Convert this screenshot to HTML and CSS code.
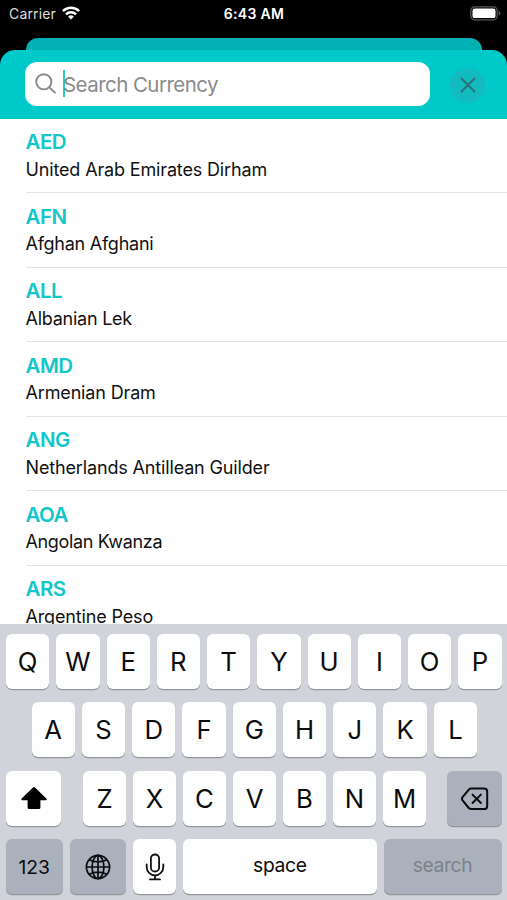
FILE: index.html
```html
<!DOCTYPE html>
<html lang="en">
<head>
<meta charset="utf-8">
<title>Search Currency</title>
<link rel="stylesheet" href="styles.css">
</head>
<body>
<div class="phone">
  <div class="status">
    <div class="carrier"><span class="carrier-name">Carrier</span>
      <svg class="wifi" width="18" height="14" viewBox="0 0 18 14" fill="none" stroke="#fff" stroke-width="2.5"><path d="M.9 5.1a11.5 11.5 0 0 1 16.2 0M4 8.4a7.1 7.1 0 0 1 10 0"/><path d="M9 13.6 6.1 10.7a4.1 4.1 0 0 1 5.8 0z" fill="#fff" stroke="none"/></svg>
    </div>
    <div class="time">6:43 AM</div>
    <svg class="battery" width="31" height="15" viewBox="0 0 31 15"><rect x=".8" y=".8" width="26.4" height="13" rx="4" fill="none" stroke="#59595b" stroke-width="1.3"/><rect x="2.5" y="2.5" width="23" height="9.6" rx="2.2" fill="#fff"/><path d="M28.6 5v4.6q1.8-.6 1.8-2.3T28.6 5z" fill="#59595b"/></svg>
  </div>
  <div class="back-card"></div>
  <header class="header">
    <div class="field">
      <svg class="glass" width="22" height="22" viewBox="0 0 22 22" fill="none" stroke="#8a8a8d" stroke-width="1.9" stroke-linecap="round"><circle cx="8.8" cy="8.8" r="7.6"/><path d="m14.4 14.4 5.6 5.3"/></svg>
      <span class="caret"></span><span class="placeholder">Search Currency</span>
    </div>
    <div class="close"><svg width="16" height="16" viewBox="0 0 16 16" stroke="#2b7478" stroke-width="2.1" stroke-linecap="round"><path d="m1.5 1.5 13 13m0-13-13 13"/></svg></div>
  </header>
  <main class="list">
    <div class="row"><div class="code">AED</div><div class="name">United Arab Emirates Dirham</div></div>
    <div class="row"><div class="code">AFN</div><div class="name snug">Afghan Afghani</div></div>
    <div class="row"><div class="code">ALL</div><div class="name snug">Albanian Lek</div></div>
    <div class="row"><div class="code">AMD</div><div class="name">Armenian Dram</div></div>
    <div class="row"><div class="code">ANG</div><div class="name">Netherlands Antillean Guilder</div></div>
    <div class="row"><div class="code">AOA</div><div class="name tight">Angolan Kwanza</div></div>
    <div class="row"><div class="code">ARS</div><div class="name">Argentine Peso</div></div>
  </main>
  <section class="keyboard">
    <div class="keys"><div class="key">Q</div><div class="key">W</div><div class="key">E</div><div class="key">R</div><div class="key">T</div><div class="key">Y</div><div class="key">U</div><div class="key">I</div><div class="key">O</div><div class="key">P</div></div>
    <div class="keys middle"><div class="key">A</div><div class="key">S</div><div class="key">D</div><div class="key">F</div><div class="key">G</div><div class="key">H</div><div class="key">J</div><div class="key">K</div><div class="key">L</div></div>
    <div class="keys">
      <div class="key shift"><svg width="28" height="24" viewBox="0 0 28 24"><path d="M13 1.5q1-.9 2 0L26.3 12.4q1.2 1.5-.6 1.8H20.4v7.3q0 1.5-1.5 1.5H9.1q-1.5 0-1.5-1.5v-7.3H2.3q-1.8-.3-.6-1.8z"/></svg></div>
      <div class="key">Z</div><div class="key">X</div><div class="key">C</div><div class="key">V</div><div class="key">B</div><div class="key">N</div><div class="key">M</div>
      <div class="key gray delete"><svg width="28" height="24" viewBox="0 0 28 24" fill="none" stroke="#090b0f" stroke-width="2" stroke-linecap="round" stroke-linejoin="round"><path d="M10.3 1.5H23q3.2 0 3.2 3.2v14.2q0 3.2-3.2 3.2H10.3q-1.5 0-2.5-1.1L1.6 13.4q-1.3-1.6 0-3.2L7.8 2.6q1-1.1 2.5-1.1z"/><path d="m11.5 7.6 8.4 8.4m0-8.4-8.4 8.4"/></svg></div>
    </div>
    <div class="keys">
      <div class="key gray numbers">123</div>
      <div class="key gray globe"><svg width="26" height="26" viewBox="0 0 26 26" fill="none" stroke="#090b0f" stroke-width="1.7"><circle cx="13" cy="13" r="11.6"/><ellipse cx="13" cy="13" rx="5.9" ry="11.6"/><path d="M13 1.4v23.2M1.4 13h23.2M4 5.8q9 4.2 18 0M4 20.2q9-4.2 18 0"/></svg></div>
      <div class="key mic"><svg width="20" height="28" viewBox="0 0 20 28" fill="none" stroke="#111" stroke-width="1.8" stroke-linecap="round"><rect x="5.9" y="1.5" width="8.2" height="17" rx="4.1"/><path d="M1.7 11.3v2.8a8.3 8.3 0 0 0 16.6 0v-2.8M10 22.3v4M5 26.4h10"/></svg></div>
      <div class="key space">space</div>
      <div class="key gray search">search</div>
    </div>
  </section>
</div>
</body>
</html>
```

FILE: styles.css
```css
* { box-sizing: border-box; }
body { margin: 0; background: #000; font-family: Inter, "Liberation Sans", sans-serif; }
svg { display: block; flex: none; }
.phone { width: 507px; height: 900px; overflow: hidden; display: flex; flex-direction: column; background: #000; }
.status { height: 37.5px; flex: none; display: grid; grid-template-columns: 1fr auto 1fr; padding: 0 8px 0 9px; color: #fff; font-size: 14px; line-height: 28px; }
.carrier { display: flex; gap: 6px; color: #dedede; }
.carrier-name { letter-spacing: .15px; }
.wifi { margin-top: 6px; }
.time { font-weight: 600; letter-spacing: .3px; }
.battery { justify-self: end; margin: 6px -2px 0 0; }
.back-card { height: 26px; flex: none; margin: 0 25px 0 25.5px; background: #00b0b3; border-radius: 12px 12px 0 0; }
.header { height: 68.5px; flex: none; margin-top: -13.5px; padding: 11.5px 22px 0 25px; background: #00c9ca; border-radius: 15px 15px 0 0; display: flex; justify-content: space-between; }
.field { width: 405px; height: 44px; background: #fff; border-radius: 12px; display: flex; align-items: center; padding-left: 9.5px; }
.caret { width: 2px; height: 27px; margin-left: 6px; background: #28c8ce; }
.placeholder { margin-left: -1.5px; padding-top: 2px; color: #8a8a8d; font-size: 20.5px; letter-spacing: -.55px; }
.close { width: 35px; height: 35px; margin-top: 6px; border-radius: 50%; background: #13bbc0; display: flex; align-items: center; justify-content: center; }
.list { height: 505.5px; flex: none; overflow: hidden; background: #fff; padding-left: 25.5px; }
.row { height: 74.5px; padding-top: 10.5px; border-bottom: 1px solid #e3e3e4; }
.code { color: #13c6c9; font-size: 20.5px; font-weight: 600; line-height: 26.5px; letter-spacing: -.5px; }
.name { color: #111; font-size: 18px; line-height: 27px; letter-spacing: -.15px; white-space: nowrap; }
.snug { letter-spacing: -.25px; }
.tight { letter-spacing: -.35px; }
.keyboard { flex: 1; background: #d0d3da; padding: 9.5px 5.5px 0 6px; display: flex; flex-direction: column; gap: 13.5px; }
.keys { height: 55px; flex: none; display: flex; gap: 7px; }
.middle { padding: 0 24.5px 0 25.5px; }
.key { flex: 1 1 0; min-width: 0; background: #fefefe; border-radius: 6px; box-shadow: 0 1.3px 0 #93969b; display: flex; align-items: center; justify-content: center; color: #0b0b0b; font-size: 25.7px; }
.gray { background: #abb1bc; }
.shift { flex: 0 0 55px; margin-right: 15px; }
.delete { flex: 0 0 55px; margin-left: 13.5px; padding: 1px 0 0 1.5px; }
.numbers, .globe { flex: 0 0 56.5px; }
.numbers { font-size: 19.3px; }
.mic { flex: 0 0 43.3px; }
.space { font-size: 19.3px; padding-bottom: 3px; letter-spacing: -.3px; }
.search { flex: 0 0 118px; font-size: 19.3px; color: #7c828b; padding-bottom: 3px; letter-spacing: -.4px; }
```
